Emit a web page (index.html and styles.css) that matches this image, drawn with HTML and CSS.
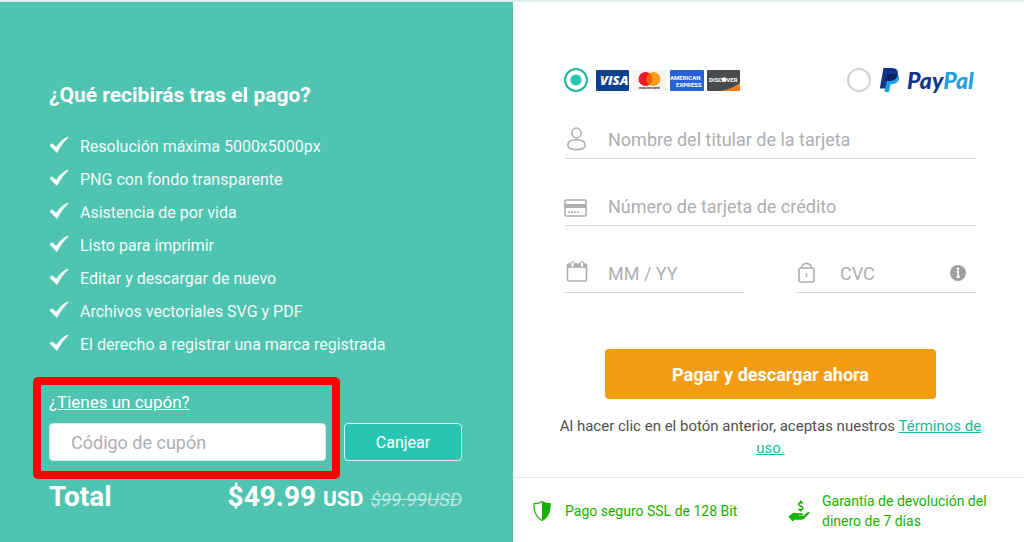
FILE: index.html
```html
<!DOCTYPE html>
<html lang="es">
  <head>
    <meta charset="UTF-8" />
    <meta name="viewport" content="width=device-width, initial-scale=1.0" />
    <title>Pago</title>
    <link rel="stylesheet" href="styles.css">
  </head>
  <body>
    <svg class="sprite" aria-hidden="true">
      <symbol id="check" viewBox="0 0 20 18">
        <path d="M0.5 9.5 L3 7.3 L7.2 10.8 C10 6.5 14 2.5 19 0.5 L19.5 1.5 C15 5.4 11.5 10.5 8 17 Z" fill="currentColor" />
      </symbol>
    </svg>

    <main class="checkout">
      <section class="summary">
        <h1>¿Qué recibirás tras el pago?</h1>
        <ul class="benefits">
          <li><svg><use href="#check" /></svg>Resolución máxima 5000x5000px</li>
          <li><svg><use href="#check" /></svg>PNG con fondo transparente</li>
          <li><svg><use href="#check" /></svg>Asistencia de por vida</li>
          <li><svg><use href="#check" /></svg>Listo para imprimir</li>
          <li><svg><use href="#check" /></svg>Editar y descargar de nuevo</li>
          <li><svg><use href="#check" /></svg>Archivos vectoriales SVG y PDF</li>
          <li><svg><use href="#check" /></svg>El derecho a registrar una marca registrada</li>
        </ul>

        <form class="coupon">
          <div class="coupon-field">
            <label for="coupon">¿Tienes un cupón?</label>
            <input type="text" id="coupon" placeholder="Código de cupón" />
          </div>
          <button type="button" class="redeem">Canjear</button>
        </form>

        <div class="total">
          <strong>Total</strong>
          <div class="price">
            <strong>$49.99 <small>USD</small></strong>
            <s>$99.99USD</s>
          </div>
        </div>
      </section>

      <section class="payment">
        <form class="pay-form">
          <div class="methods">
            <label class="method">
              <input type="radio" name="method" aria-label="Tarjeta" checked />
              <span class="cards">
                <svg viewBox="0 0 34 21">
                  <rect width="33" height="21" rx="1" fill="#0b3f8f" />
                  <text x="4" y="15" class="visa">VISA</text>
                  <path d="M4 6.5 H7 L8.5 11 Z" fill="#f2a534" />
                </svg>
                <svg viewBox="0 0 34 21">
                  <rect width="33" height="21" rx="1" fill="#f3f3f3" />
                  <circle cx="12.5" cy="9" r="7" fill="#eb1c26" />
                  <circle cx="20.5" cy="9" r="7" fill="#f79e1b" />
                  <path d="M16.5 3.3 A7 7 0 0 1 16.5 14.7 A7 7 0 0 1 16.5 3.3" fill="#ff5f00" />
                  <text x="6" y="19" class="mastercard">mastercard</text>
                </svg>
                <svg viewBox="0 0 34 21">
                  <rect width="34" height="21" rx="1" fill="#2763d8" />
                  <text x="0" y="10" class="amex">AMERICAN</text>
                  <text x="6" y="17" class="amex">EXPRESS</text>
                </svg>
                <svg viewBox="0 0 34 21">
                  <rect width="33" height="21" rx="1" fill="#4a4b4d" />
                  <path d="M14 21 C22 19.5 28 16.5 33 13 V20 Q33 21 32 21 Z" fill="#f47b20" />
                  <text x="2" y="12" class="discover">DISCOVER</text>
                  <circle cx="17" cy="9.5" r="2.3" fill="#fff" />
                </svg>
              </span>
            </label>
            <label class="method">
              <input type="radio" name="method" aria-label="PayPal" />
              <svg class="paypal" viewBox="0 0 98 28">
                <path d="M8 8 H17.5 C21.5 9 21 17.5 14 18 L11.5 18.5 L10 26 H5.5 Z" fill="#1ba0e0" />
                <path d="M4.5 2 H12.5 C18 2 20 5 18.4 9.5 C17.2 13.4 14 15 9.5 15 H7.8 L6.4 22.5 H0.8 Z" fill="#10348c" />
                <path d="M8.2 8 H18.7 C18 13 14.5 15 9.5 15 H7 Z" fill="#0b2060" />
                <text x="28" y="23" class="paypal-name"><tspan fill="#10348c">Pay</tspan><tspan fill="#1ba0e0">Pal</tspan></text>
              </svg>
            </label>
          </div>

          <div class="field">
            <svg viewBox="0 0 24 24">
              <ellipse cx="12.5" cy="6" rx="4.5" ry="5" />
              <path d="M3.8 18.3 C3.8 14.3 7.5 12.7 12.5 12.7 S21.2 14.3 21.2 18.3 C21.2 21.3 17.3 22.6 12.5 22.6 S3.8 21.3 3.8 18.3 Z" />
            </svg>
            <input type="text" aria-label="Nombre del titular de la tarjeta" placeholder="Nombre del titular de la tarjeta" />
          </div>
          <div class="field">
            <svg viewBox="0 0 24 24">
              <rect x="1" y="6" width="21" height="16" rx="1" />
              <path d="M1 12 H22" stroke-width="4" />
              <path d="M4 18.3 H16" stroke-dasharray="2 1" />
            </svg>
            <input type="text" aria-label="Número de tarjeta de crédito" placeholder="Número de tarjeta de crédito" />
          </div>
          <div class="field-row">
            <div class="field">
              <svg viewBox="0 0 24 24">
                <rect x="3.5" y="3" width="19" height="17" rx="1" />
                <path d="M4 5 H22" stroke-width="3.5" />
                <rect x="7" y="0.5" width="3" height="6" rx="1.5" fill="#fff" stroke-width="1" />
                <rect x="16.5" y="0.5" width="3" height="6" rx="1.5" fill="#fff" stroke-width="1" />
              </svg>
              <input type="text" aria-label="Fecha de caducidad" placeholder="MM / YY" />
            </div>
            <div class="field">
              <svg viewBox="0 0 24 24">
                <rect x="3" y="7" width="15" height="14" rx="2" />
                <path d="M5.5 7 C6.5 1 14.5 1 15.5 7" />
                <path d="M10.5 12 V16" />
              </svg>
              <input type="text" aria-label="CVC" placeholder="CVC" />
              <svg class="info" viewBox="0 0 18 18">
                <circle cx="9" cy="9" r="8" fill="#a0a0a2" stroke="none" />
                <path d="M7.5 7.6 H9.2 V13 M7.5 13 H11" stroke="#fff" stroke-width="1.6" />
                <circle cx="9" cy="4.7" r="1.3" fill="#fff" stroke="none" />
              </svg>
            </div>
          </div>

          <button type="button" class="pay">Pagar y descargar ahora</button>
          <p class="terms">Al hacer clic en el botón anterior, aceptas nuestros <a href="#">Términos de uso.</a></p>
        </form>

        <footer class="guarantees">
          <div class="guarantee">
            <svg viewBox="0 0 22 22">
              <path d="M11 1.5 C8.5 3.3 6 3.8 3 3.6 C2.6 11 4.5 17 11 20.5 C17.5 17 19.4 11 19 3.6 C16 3.8 13.5 3.3 11 1.5 Z" fill="none" stroke="currentColor" stroke-width="1.2" />
              <path d="M11 1.5 C13.5 3.3 16 3.8 19 3.6 C19.4 11 17.5 17 11 20.5 Z" fill="currentColor" />
            </svg>
            <span>Pago seguro SSL de 128 Bit</span>
          </div>
          <div class="guarantee">
            <svg viewBox="0 0 22 22">
              <path d="M0.5 16.5 L5 13 C7 12.2 9 13 10.5 13.3 H14 C15.8 13.5 15.5 15.5 14 15.5 H10.5 V16.1 H14.5 C16 16 17.5 13.5 20 12 C21.5 11.3 22 12.3 21.3 13.2 L16 18.8 C15 19.7 13.5 19.7 12 19.7 H6.5 L4.5 21.5 Z" fill="currentColor" />
              <path d="M15 3.3 C14 2.3 10.6 2.2 10.6 4.3 C10.6 6.5 15 5.6 15 8 C15 10.3 11.3 10.2 10.3 8.9 M12.8 0.5 V2.7 M12.8 9.5 V11.5" fill="none" stroke="currentColor" stroke-width="1.6" />
            </svg>
            <span>Garantía de devolución del dinero de 7 días</span>
          </div>
        </footer>
      </section>
    </main>
  </body>
</html>
```
FILE: styles.css
```css
:root {
  --teal: #4fc4b1;
  --accent: #1abc9c;
  --gray: #aeaeb2;
  --line: #dcdcde;
  --green: #17b200;
}

* {
  box-sizing: border-box;
}

body {
  margin: 0;
  font-family: Roboto, "Liberation Sans", sans-serif;
  font-size: 16px;
  color: #505050;
  background: #fff;
}

input,
button {
  font: inherit;
}

.sprite {
  display: none;
}

.checkout {
  display: flex;
  min-height: 100vh;
  border-top: 2px solid #dfeceb;
}

.summary {
  flex: 0 0 50.1%;
  padding: 80px 51px 24px 49px;
  background: var(--teal);
  color: #fff;
}

h1 {
  margin: 0 0 22px;
  font-size: 21px;
  line-height: 26px;
  font-weight: 700;
}

.benefits {
  list-style: none;
  margin: 0 0 31px;
  padding: 0;
}

.benefits li {
  display: flex;
  align-items: center;
  gap: 11px;
  line-height: 33px;
  color: #f1fbf9;
}

.benefits svg {
  width: 20px;
  height: 18px;
  margin-bottom: 4px;
}

/* coupon */
.coupon {
  display: flex;
  align-items: flex-end;
  gap: 18px;
}

.coupon-field {
  position: relative;
  flex: 1;
  min-width: 0;
}

.coupon-field::after {
  content: "";
  position: absolute;
  inset: -15px -14px -18px -16px;
  border: 8px solid #f00;
  border-radius: 5px;
  pointer-events: none;
}

.coupon-field label {
  display: block;
  margin-bottom: 11px;
  line-height: 20px;
  font-size: 17px;
  text-decoration: underline;
}

.coupon-field input {
  display: block;
  width: 100%;
  height: 38px;
  padding: 0 21px;
  border: 1px solid #d5e5e4;
  border-radius: 4px;
  background: #fff;
  font-size: 18px;
}

input::placeholder {
  color: var(--gray);
  opacity: 1;
}

.redeem {
  width: 118px;
  height: 38px;
  border: 1px solid #d8f5f0;
  border-radius: 4px;
  background: #29c5b3;
  color: #fff;
}

.total {
  display: flex;
  justify-content: space-between;
  align-items: baseline;
  margin-top: 18px;
  line-height: 36px;
  font-size: 28px;
}

.total strong {
  font-weight: 700;
}

.price small {
  font-size: 21px;
}

.price s {
  font-size: 19px;
  font-style: italic;
  color: #b9e7df;
}

/* payment */
.payment {
  flex: 1;
  min-width: 0;
  display: flex;
  flex-direction: column;
}

.pay-form {
  flex: 1;
  padding: 64px 47px 0 51px;
}

.methods {
  display: flex;
  justify-content: space-between;
  align-items: center;
}

.method,
.cards {
  display: flex;
  align-items: center;
}

.method {
  gap: 8px;
}

.cards {
  gap: 3px;
}

.cards svg {
  width: 34px;
  height: 21px;
}

.method input {
  appearance: none;
  width: 24px;
  height: 24px;
  margin: 0;
  border: 2px solid #d0d3d5;
  border-radius: 50%;
}

.method input:checked {
  border-color: var(--accent);
  background: radial-gradient(circle, #29c5b3 5px, transparent 6px);
}

.paypal {
  width: 98px;
  height: 28px;
}

.paypal-name {
  font: italic 900 23px Lato, sans-serif;
}

.visa {
  font: italic 800 13px "Open Sans", sans-serif;
  fill: #fff;
}

.mastercard {
  font: 700 4px Roboto, sans-serif;
  fill: #333;
}

.amex {
  font: 700 6px Roboto, sans-serif;
  fill: #fff;
}

.discover {
  font: 700 6px Roboto, sans-serif;
  fill: #fff;
}

.field {
  display: flex;
  align-items: center;
  gap: 20px;
  height: 39px;
  margin-top: 28px;
  border-bottom: 1px solid var(--line);
}

.methods + .field {
  margin-top: 26px;
}

.field svg {
  flex: none;
  width: 24px;
  height: 24px;
  fill: none;
  stroke: var(--gray);
  stroke-width: 1.6;
}

.field input {
  flex: 1;
  min-width: 0;
  padding: 0;
  border: 0;
  outline: 0;
  background: none;
  font-size: 18px;
}

.field .info {
  width: 18px;
  height: 18px;
  margin-right: 10px;
}

.field-row {
  display: grid;
  grid-template-columns: 1fr 1fr;
  gap: 51px;
}

.field-row .field {
  min-width: 0;
}

.pay {
  display: block;
  width: 80%;
  height: 50px;
  margin: 56px auto 0;
  border: 0;
  border-radius: 4px;
  background: #f39c12;
  color: #fff;
  font-size: 18px;
  font-weight: 700;
}

.terms {
  margin: 16px -17px 18px;
  font-size: 15px;
  line-height: 22px;
  text-align: center;
}

.terms a {
  color: var(--accent);
}

.guarantees {
  display: flex;
  justify-content: space-between;
  gap: 24px;
  padding: 13px 16px 12px 18px;
  border-top: 1px solid #e6e6e6;
  color: var(--green);
  font-size: 14px;
  line-height: 20px;
}

.guarantee {
  display: flex;
  align-items: center;
  gap: 12px;
}

.guarantee:last-child {
  flex: 0 0 220px;
}

.guarantee svg {
  flex: none;
  width: 22px;
  height: 22px;
}
```
